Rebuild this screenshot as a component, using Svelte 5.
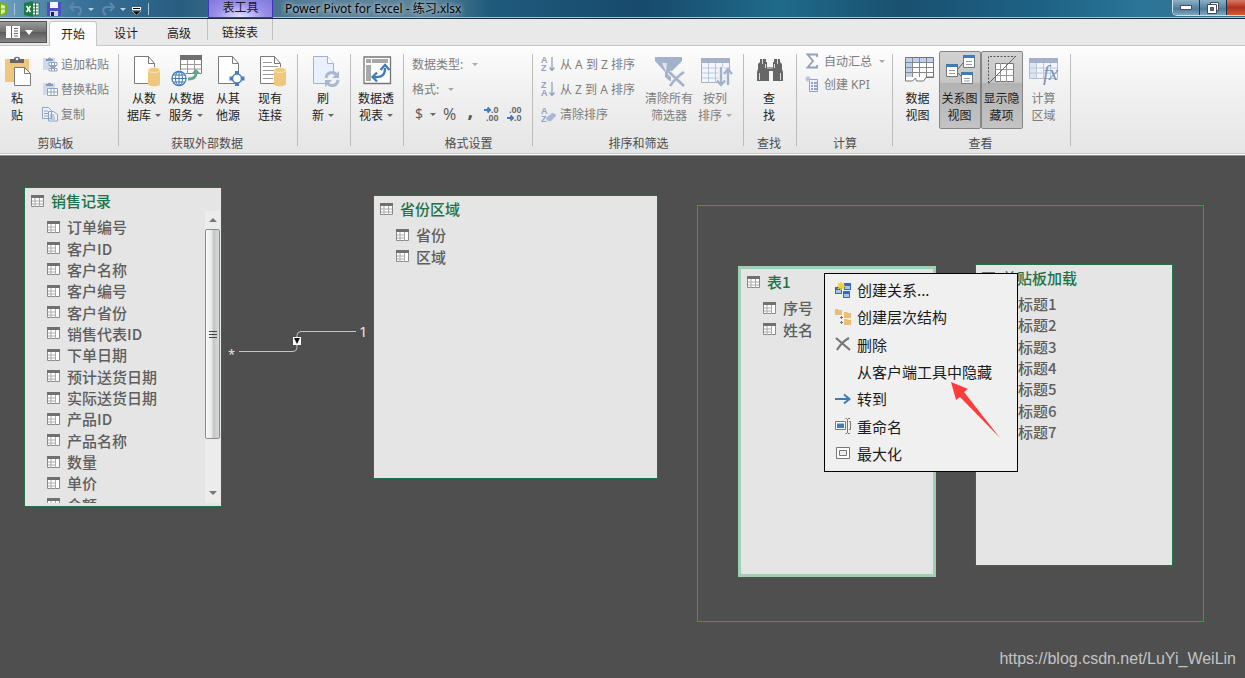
<script>
    // Icon bodies, big ones are drawn on a 32x32 grid and small ones on 16x16
    const page = '<path d="M6.5 1.5h14l6 7v20h-20z" fill="#fff" stroke="#7a7a7a"/><path d="M20.5 1.5v7h6" fill="none" stroke="#7a7a7a"/>';
    const drum = '<path d="M20 15v14c0 3 12 3 12 0V15z" fill="#edc87e"/><ellipse cx="26" cy="15" rx="6" ry="2.5" fill="#f0c878" stroke="#fff6e0" stroke-width=".7"/>';

    const icons = {
        paste: '<path d="M4 4h24v23H4z" fill="#edc87e"/><path d="M9 8V4h4c0-3 6-3 6 0h4v4z" fill="#666"/><circle cx="16" cy="4" r="1.3" fill="#eee"/><path d="M13.5 12.5h10l6 6v12h-16z" fill="#fff" stroke="#7a7a7a"/><path d="M23.5 12.5v6h6" fill="none" stroke="#7a7a7a"/>',
        database: page + drum,
        service: '<path d="M10.5.5h21v18h-21z" fill="#fff" stroke="#7a7a7a"/><path d="M10 0h22v5H10z" fill="#6f6f6f"/><path d="M17.5 5v14M24.5 5v14M11 9.5h20M11 14h20" stroke="#999"/><circle cx="9" cy="23.5" r="8.5" fill="#f2f2f2"/><circle cx="9" cy="23.5" r="7" fill="#fff" stroke="#3f78b4" stroke-width="1.3"/><path d="M2 23.5h14M9 16.5v14M3.5 20h11M3.5 27h11" stroke="#3f78b4"/><ellipse cx="9" cy="23.5" rx="3.5" ry="7" fill="none" stroke="#3f78b4"/><path d="M18 24c6 0 8-2 8-6" fill="none" stroke="#6aa28e" stroke-width="3"/><path d="M21 19l5-5 5 5z" fill="#6aa28e"/>',
        other: page + '<path d="M25 16v15M17.5 23.5h15" stroke="#4a7fb8" stroke-width="4"/><path d="M25 17.5l6 6-6 6-6-6z" fill="#4a7fb8"/><circle cx="25" cy="23.5" r="4.5" fill="#fff" stroke="#4a7fb8" stroke-width="1.5"/>',
        existing: page + '<path d="M9 7.5h9M9 11.5h15M9 15.5h12M9 19.5h12M9 23.5h10" stroke="#999"/>' + drum,
        refresh: '<path d="M6.5 1.5h14l6 7v20h-20z" fill="#eaf1fc" stroke="#9fb2d3"/><path d="M20.5 1.5v7h6" fill="#fff" stroke="#9fb2d3"/><circle cx="25" cy="24" r="8" fill="#f2f2f2"/><path d="M19 23c1-7 9-7 11-2M31 25c-1 7-9 7-11 2" fill="none" stroke="#a9b8d2" stroke-width="3"/><path d="M32 16v7h-7zM18 32v-7h7z" fill="#a9b8d2"/>',
        pivot: '<path d="M4 2h26.5v26.5H4z" fill="#fff" stroke="#767676" stroke-width="1.3"/><path d="M6 4h5v4H6zM12 4h16v4H12zM6 10h5v16H6z" fill="#a8a8a8"/><path d="M14 22c9 1 11-3 11-9" fill="none" stroke="#3f7cb8" stroke-width="2.3"/><path d="M20.5 15l4.5-5 4.5 5M17 17.5L12.5 22l4.5 4.5" fill="none" stroke="#3f7cb8" stroke-width="2.3"/>',
        funnel: '<path d="M2 2h27v4L18 17v10l-6-5v-5L2 6z" fill="#a3b1cb"/><path d="M9 8h5l-1 9z" fill="#dce4f1"/><path d="M16 17l15 14M31 17c-6 4-10 8-14 14" stroke="#f0f0f0" stroke-width="5" fill="none"/><path d="M16 17l15 14M31 17c-6 4-10 8-14 14" stroke="#a3b1cb" stroke-width="2.5" fill="none"/>',
        column: '<path d="M2.5 3.5h28v24h-28z" fill="#f3f7fd" stroke="#a3b1cb"/><path d="M2 3h29v5H2z" fill="#a3b1cb"/><path d="M9.5 8v20M16.5 8v20M23.5 8v20M3 13h27M3 18h27M3 23h27" stroke="#b9c6dc"/><path d="M22 12v17M29 30V14" stroke="#f0f0f0" stroke-width="6"/><path d="M22 12v17M18 25.5l4 4.5 4-4.5M29 30V15M25 19l4-5 4 5" fill="none" stroke="#a3b1cb" stroke-width="2.3"/>',
        find: '<path d="M7 4h6v3h1v5h6V7h1V4h6v3l2 2v5l1 3v9h-10V16h-4v10H4v-9l1-3V9l2-2z" fill="#666"/><path d="M9.5 4v5M12.5 9v4M21.5 9v4M24.5 4v5M6.5 18v7M27.5 18v7M14 13h6" stroke="#d8d8d8"/>',
        dataView: '<path d="M3.5 2.5h28v20h-28z" fill="#fff" stroke="#747474"/><path d="M4 3h27v5H4zM4 8h6v14H4z" fill="#bdd2ea"/><path d="M10.5 3v19M17.5 3v19M24.5 3v19M4 7.5h27M4 12.5h27M4 17.5h27" stroke="#878787"/><path d="M3.5 22v4h7l3-3 1 3h7l3-4h7" fill="#fff" stroke="#747474"/>',
        diagram: '<path d="M14 14l5-6M14 18l4 4" stroke="#666"/><path d="M2.5 9.5h11v12h-11zM19.5.5h11v12h-11zM17.5 17.5h11v11h-11z" fill="#fff" stroke="#777"/><path d="M2 9h12v3H2zM19 0h12v3H19zM17 17h12v3H17z" fill="#3f7cb8"/><path d="M5 15.5h6M5 18.5h6M22 6.5h6M22 9.5h6M20 23.5h6M20 26h6" stroke="#999"/>',
        hidden: '<path d="M9.5 8.5h18v18h-18z" fill="#fff" stroke="#777"/><path d="M14.5 8v19M20.5 8v19M9 14.5h19M9 20.5h19" stroke="#999"/><path d="M2.5 28V1.5H30" fill="none" stroke="#555" stroke-dasharray="2 1.5"/><path d="M2.5 28.5l27-27" stroke="#666"/>',
        area: '<path d="M1.5 3.5h28v20h-28z" fill="#f3f7fd" stroke="#b0bdd4"/><path d="M1 3h29v5H1z" fill="#a3b1cb"/><path d="M2 8h6v15H2z" fill="#dbe6f5"/><path d="M8.5 8v16M15.5 8v16M22.5 8v16M2 13h27M2 18h27" stroke="#b9c6dc"/><text x="15" y="25" font-family="Liberation Serif, serif" font-style="italic" font-size="21" fill="#7f92b4">fx</text>',

        append: '<path d="M1 2h12v12H1z" fill="#cfdbed"/><path d="M4 3h2a1 1 0 0 1 3 0h2v2H4z" fill="#8799b8"/><path d="M7 6.5h8v3H7zM7 12.5h8V15H7z" fill="#fff" stroke="#91a2c0"/><path d="M8 10h6l-3 3zM9.5 6.5v3M12.5 6.5v3M9.5 13v2M12.5 13v2" fill="#91a2c0" stroke="#91a2c0"/>',
        replace: '<path d="M1 2h12v12H1z" fill="#cfdbed"/><path d="M4 3h2a1 1 0 0 1 3 0h2v2H4z" fill="#8799b8"/><path d="M5.5 7.5h10v7h-10z" fill="#fff" stroke="#91a2c0"/><path d="M5 11h10M9 8v6M12 8v6" stroke="#91a2c0"/>',
        copy: '<path d="M.5 1.5h6l3 3v8h-9zM6.5 5.5h5l4 3V15h-9z" fill="#edf3fc" stroke="#91a2c0"/><path d="M2 5h4M2 7.5h4M2 10h4M8 9h4M8 11h5M8 13h5" stroke="#91a2c0"/>',
        eraser: '<text x="0" y="8" font-family="Liberation Sans, sans-serif" font-weight="bold" font-size="9" fill="#91a2c0">A</text><text x="0" y="16" font-family="Liberation Sans, sans-serif" font-weight="bold" font-size="9" fill="#91a2c0">Z</text><path d="M5 12l6-5q4 0 4 3l-5 5q-4 1-5-3z" fill="#a9b9d5"/>',
        sum: '<path d="M12 4V1.5H2.5L8 8l-5.5 6.5H12V12" fill="none" stroke="#8f9fbd" stroke-width="1.8"/>',
        kpi: '<path d="M4.5 3.5h8v12h-8z" fill="#eef3fb" stroke="#91a2c0"/><path d="M6 7h2M6 10h2M6 13h2M9 7h3M9 10h3M9 13h3" stroke="#91a2c0" stroke-width="2"/><path d="M3 0v6M0 3h6M1 1l4 4M5 1L1 5" stroke="#a9b9d5"/>',
        moreDecimals: '<path d="M0 4h6M3.5 1.5L6 4 3.5 6.5" fill="none" stroke="#3f7cb8" stroke-width="2"/><text x="7" y="7" font-family="Liberation Sans, sans-serif" font-weight="bold" font-size="9" fill="#666">.0</text><text x="2" y="15" font-family="Liberation Sans, sans-serif" font-weight="bold" font-size="9" fill="#666">.00</text>',
        lessDecimals: '<path d="M0 12h6M3.5 9.5L6 12l-2.5 2.5" fill="none" stroke="#3f7cb8" stroke-width="2"/><text x="2" y="7" font-family="Liberation Sans, sans-serif" font-weight="bold" font-size="9" fill="#666">.00</text><text x="7" y="15" font-family="Liberation Sans, sans-serif" font-weight="bold" font-size="9" fill="#666">.0</text>',

        table: '<path d="M2.5 3.5h12v10h-12z" fill="#fff" stroke="#8a8a8a"/><path d="M2 2h13v3H2z" fill="#707070"/><path d="M6 5v9M10.5 5v9M3 8h11M3 11h11" stroke="#aaa"/>',
        field: '<path d="M2.5 3.5h12v10h-12z" fill="#fff" stroke="#8a8a8a"/><path d="M2 2h13v3H2z" fill="#707070"/><path d="M6 5v9M10.5 5v9M3 8h8M3 11h8" stroke="#aaa"/>',

        relation: '<path d="M0 5h7v7H0zM9 1h7v7H9zM8 9h7v7H8z" fill="#3c66b8"/><path d="M1 8h5v3H1zM10 4h5v3h-5zM9 12h5v3H9z" fill="#a9c3ee"/><path d="M6 0v8M2 4h8M3 1l6 6M9 1L3 7" stroke="#f2cd3c" stroke-width="1.5"/>',
        hierarchy: '<path d="M0 0h3l1 1h3v5H0zM9 3h3l1 1h3v5H9zM9 10h3l1 1h3v5H9z" fill="#e9bd75"/><path d="M6.5 7v3M5 8.5h3M6.5 12v3M5 13.5h3" stroke="#777"/>',
        remove: '<path d="M1 2l14 12M14 2C8 5 5 9 2 14" fill="none" stroke="#777" stroke-width="2.2"/>',
        goTo: '<path d="M0 8h14M9 3.5L14.5 8 9 12.5" fill="none" stroke="#3f7cb8" stroke-width="2"/>',
        rename: '<path d="M.5 3.5h10v8H.5z" fill="#fff" stroke="#777"/><path d="M2 5.5h7V10H2z" fill="#3f7cb8"/><path d="M12.5 1v14M10.5.5H12M13 .5h2M10.5 15.5H12M13 15.5h2M14 3.5h1.5v8H14" fill="none" stroke="#777"/>',
        maximize: '<path d="M1.5 2.5h13v11h-13z" fill="#fff" stroke="#777"/><path d="M4.5 5.5h7v5h-7z" fill="#eee" stroke="#777"/>',

        excel: '<path d="M7 2h8v12H7z" fill="#fff" stroke="#1e7a45"/><path d="M9 5h5M9 8h5M9 11h5M11.5 2v12" stroke="#1e7a45"/><path d="M0 2l9-2v16l-9-2z" fill="#1e7a45"/><path d="M2.5 5l4 6M6.5 5l-4 6" stroke="#fff" stroke-width="1.5"/>',
        save: '<path d="M1 1h14v14H1z" fill="#4c4fc4"/><path d="M4 1h8v6H4z" fill="#f4f6ff"/><path d="M4 10h8v5H4z" fill="#cfd3e6"/><path d="M5 11h3v4H5z" fill="#1d1f56"/>',
        undo: '<path d="M6 2L2 6l4 4M2 6h7c5 0 5 6 1 8" fill="none" stroke="#5f86ad" stroke-width="2"/>',
        redo: '<path d="M10 2l4 4-4 4M14 6H7c-5 0-5 6-1 8" fill="none" stroke="#5f86ad" stroke-width="2"/>'
    };

    const contextMenu = [
        { icon: 'relation', label: '创建关系...' },
        { icon: 'hierarchy', label: '创建层次结构' },
        { icon: 'remove', label: '删除' },
        { icon: '', label: '从客户端工具中隐藏' },
        { icon: 'goTo', label: '转到' },
        { icon: 'rename', label: '重命名' },
        { icon: 'maximize', label: '最大化' }
    ];

    const tables = [
        {
            id: 'sales',
            name: '销售记录',
            fields: ['订单编号', '客户ID', '客户名称', '客户编号', '客户省份', '销售代表ID', '下单日期',
                '预计送货日期', '实际送货日期', '产品ID', '产品名称', '数量', '单价', '金额']
        },
        { id: 'region', name: '省份区域', fields: ['省份', '区域'] },
        { id: 'sheet', name: '表1', fields: ['序号', '姓名'] },
        { id: 'clip', name: '剪贴板加载', fields: ['标题1', '标题2', '标题3', '标题4', '标题5', '标题6', '标题7'] }
    ];

    let selected = $state('sheet');
    let diagramOn = $state(true);
    let hiddenOn = $state(true);

    // three rows take 64px
    function listHeight(fields) {
        return Math.round((fields.length * 64) / 3);
    }
</script>

{#snippet icon(name, size)}
    <svg class="icon" width={size} height={size} viewBox="0 0 {size} {size}" overflow="visible" aria-hidden="true">{@html icons[name]}</svg>
{/snippet}

{#snippet big(name, first, second, caret, disabled)}
    <button class="big" {disabled}>
        {@render icon(name, 32)}
        <span>{first}</span>
        <span>{second}{#if caret}<i class="caret"></i>{/if}</span>
    </button>
{/snippet}

{#snippet small(name, label, caret)}
    <button class="small" disabled>
        {@render icon(name, 16)}
        <span>{label}</span>
        {#if caret}<i class="caret"></i>{/if}
    </button>
{/snippet}

{#snippet sort(top, bottom, label)}
    <button class="small" disabled>
        <svg class="icon" width="16" height="16" viewBox="0 0 16 16" aria-hidden="true">
            <g font-family="Liberation Sans, sans-serif" font-weight="bold" font-size="9" fill="#91a2c0">
                <text x="0" y="7">{top}</text>
                <text x="0" y="15">{bottom}</text>
            </g>
            <path d="M11 1v13M8.5 11.5L11 14.5l2.5-3" fill="none" stroke="#91a2c0" stroke-width="1.3" />
        </svg>
        <span>{label}</span>
    </button>
{/snippet}

<div class="window">
    <header class="titlebar">
        <div class="quick">
            <svg width="7" height="16" viewBox="0 0 7 16" aria-hidden="true">
                <path d="M0 2l6 2v8l-6 3z" fill="#d9efb0" stroke="#78ae22" stroke-width="2" />
                <path d="M0 8h6" stroke="#78ae22" />
            </svg>
            <i class="bar"></i>
            <button aria-label="Excel">{@render icon('excel', 16)}</button>
            <button aria-label="保存">{@render icon('save', 16)}</button>
            <button aria-label="撤消">{@render icon('undo', 16)}</button>
            <i class="caret pale"></i>
            <button aria-label="恢复">{@render icon('redo', 16)}</button>
            <i class="caret pale"></i>
            <button aria-label="自定义">
                <svg width="9" height="8" viewBox="0 0 9 8"><path d="M0 0h9v3H0z" fill="#fff" /><path d="M1 1h7v1H1z" /><path d="M0 4h9L4.5 8z" stroke="#fff" stroke-width=".5" /></svg>
            </button>
            <i class="bar"></i>
        </div>
        <div class="context-title">表工具</div>
        <h1>Power Pivot for Excel - 练习.xlsx</h1>
        <div class="controls">
            <button aria-label="最小化"><svg width="12" height="6" viewBox="0 0 12 6"><path d="M.5.5h11v4H.5z" fill="#fff" stroke="#444b5c" /></svg></button>
            <button aria-label="还原"><svg width="12" height="12" viewBox="0 0 12 12"><path d="M3.5.5h8v8h-8z" fill="#fff" stroke="#444b5c" /><path d="M.5 2.5h9v9h-9z" fill="#fff" stroke="#444b5c" /><path d="M3.5 5.5h3v3h-3z" fill="#4f7c9c" stroke="#444b5c" /></svg></button>
            <button class="close" aria-label="关闭"></button>
        </div>
    </header>

    <nav class="tabs">
        <button class="file" aria-label="文件">
            <svg width="14" height="12" viewBox="0 0 14 12"><path d="M0 0h14v12H0z" fill="#fff" /><path d="M5.5 0v12M8 2.5h4M8 5h4M8 7.5h4M8 10h4" stroke="#666" /></svg>
            <svg width="8" height="5" viewBox="0 0 8 5"><path d="M0 0h8L4 5z" fill="#fff" /></svg>
        </button>
        <button class="tab active">开始</button>
        <button class="tab">设计</button>
        <button class="tab">高级</button>
        <button class="tab linked">链接表</button>
    </nav>

    <div class="ribbon">
        <section class="group clipboard">
            <div class="body">
                {@render big('paste', '粘', '贴', false, false)}
                <div class="stack">
                    {@render small('append', '追加粘贴')}
                    {@render small('replace', '替换粘贴')}
                    {@render small('copy', '复制')}
                </div>
            </div>
            <h2>剪贴板</h2>
        </section>
        <section class="group external">
            <div class="body">
                {@render big('database', '从数', '据库', true, false)}
                {@render big('service', '从数据', '服务', true, false)}
                {@render big('other', '从其', '他源', false, false)}
                {@render big('existing', '现有', '连接', false, false)}
            </div>
            <h2>获取外部数据</h2>
        </section>
        <section class="group single">
            <div class="body">{@render big('refresh', '刷', '新', true, false)}</div>
        </section>
        <section class="group single">
            <div class="body">{@render big('pivot', '数据透', '视表', true, false)}</div>
        </section>
        <section class="group format">
            <div class="body">
                <div class="stack">
                    <button class="small" disabled>数据类型: <i class="caret"></i></button>
                    <button class="small" disabled>格式: <i class="caret"></i></button>
                    <div class="numbers">
                        <button>$</button>
                        <i class="caret"></i>
                        <button class="percent">%</button>
                        <button class="comma">,</button>
                        <button aria-label="增加小数位">{@render icon('moreDecimals', 16)}</button>
                        <button aria-label="减少小数位">{@render icon('lessDecimals', 16)}</button>
                    </div>
                </div>
            </div>
            <h2>格式设置</h2>
        </section>
        <section class="group sorting">
            <div class="body">
                <div class="stack">
                    {@render sort('A', 'Z', '从 A 到 Z 排序')}
                    {@render sort('Z', 'A', '从 Z 到 A 排序')}
                    {@render small('eraser', '清除排序')}
                </div>
                {@render big('funnel', '清除所有', '筛选器', false, true)}
                {@render big('column', '按列', '排序', true, true)}
            </div>
            <h2>排序和筛选</h2>
        </section>
        <section class="group single">
            <div class="body">{@render big('find', '查', '找', false, false)}</div>
            <h2>查找</h2>
        </section>
        <section class="group calc">
            <div class="body">
                <div class="stack">
                    {@render small('sum', '自动汇总', true)}
                    {@render small('kpi', '创建 KPI')}
                </div>
            </div>
            <h2>计算</h2>
        </section>
        <section class="group view">
            <div class="body">
                {@render big('dataView', '数据', '视图', false, false)}
                <button class="big" class:on={diagramOn} aria-pressed={diagramOn} onclick={() => (diagramOn = !diagramOn)}>
                    {@render icon('diagram', 32)}
                    <span>关系图</span>
                    <span>视图</span>
                </button>
                <button class="big" class:on={hiddenOn} aria-pressed={hiddenOn} onclick={() => (hiddenOn = !hiddenOn)}>
                    {@render icon('hidden', 32)}
                    <span>显示隐</span>
                    <span>藏项</span>
                </button>
                {@render big('area', '计算', '区域', false, true)}
            </div>
            <h2>查看</h2>
        </section>
    </div>

    <main class="canvas">
        <div class="frame"></div>

        <svg class="link" width="150" height="60" viewBox="0 0 150 60" aria-hidden="true">
            <path d="M13 32.5h54q4 0 4-4v-12q0-4 4-4h55" fill="none" stroke="#c4c4c4" />
            <path d="M67 18h8v8h-8z" fill="#fff" />
            <path d="M68 19h6l-3 6z" fill="#111" />
            <text x="2" y="40" font-family="Open Sans, sans-serif" font-size="13" fill="#eee">*</text>
            <text x="133" y="18" font-family="Open Sans, sans-serif" font-size="15" fill="#eee">1</text>
        </svg>

        {#each tables as table}
            <!-- svelte-ignore a11y_click_events_have_key_events, a11y_no_noninteractive_element_interactions -->
            <article class="table {table.id}" class:selected={selected === table.id} onclick={() => (selected = table.id)}>
                <h3>{@render icon('table', 16)}{table.name}</h3>
                <div class="scroll">
                    <ul style="height: {listHeight(table.fields)}px">
                        {#each table.fields as field}
                            <li>{@render icon('field', 16)}{field}</li>
                        {/each}
                    </ul>
                    {#if table.id === 'sales'}
                        <div class="scrollbar">
                            <i class="up"></i>
                            <div class="thumb"><i></i><i></i><i></i></div>
                            <i class="down"></i>
                        </div>
                    {/if}
                </div>
            </article>
        {/each}

        <div class="menu" role="menu">
            {#each contextMenu as item}
                <button role="menuitem">
                    <span class="slot">{#if item.icon}{@render icon(item.icon, 16)}{/if}</span>
                    {item.label}
                </button>
            {/each}
        </div>

        <svg class="pointer" width="50" height="56" viewBox="0 0 50 56" aria-hidden="true">
            <path d="M0 0l17 7-4 3 36 46L9 15l-4 3z" fill="#ff3b3b" />
        </svg>

        <p class="watermark">https://blog.csdn.net/LuYi_WeiLin</p>
    </main>
</div>

<style>
    :global(body) {
        margin: 0;
        background: #4f4f4f;
    }

    .window {
        display: flex;
        flex-direction: column;
        min-height: 100vh;
        overflow: hidden;
        font: 12px/17px "Noto Sans CJK SC", sans-serif;
        color: #1c1c1c;
    }

    button {
        border: none;
        background: none;
        padding: 0;
        margin: 0;
        font: inherit;
        color: inherit;
        cursor: pointer;
    }

    button:disabled {
        color: #7d7d7d;
        cursor: default;
    }

    .icon {
        flex: none;
        display: block;
    }

    .caret {
        display: inline-block;
        border: 3px solid transparent;
        border-top-color: #666;
        border-bottom: none;
        margin-left: 4px;
        vertical-align: 3px;
    }

    button:disabled .caret {
        border-top-color: #aaa;
    }

    /* title bar */
    .titlebar {
        display: flex;
        height: 18px;
        border-bottom: 1px solid #1b2e40;
        box-shadow: inset 0 -1px #9cc4d8;
        background: linear-gradient(90deg, #6d9fc0 0, #3a7299 80px, #285d80 180px, #5c8299 330px, #5c8299 430px, #1f5a7c 490px, #174a6c 640px, #1f6a8a 780px, #1a5070 900px, #1d6285 1040px, #2b7598 1140px, #3d6f8c 100%);
    }

    .quick {
        display: flex;
        align-items: center;
        width: 208px;
        box-sizing: border-box;
    }

    .quick button {
        margin-left: 6px;
    }

    .quick .bar {
        width: 1px;
        height: 12px;
        margin: 0 3px 0 7px;
        background: #a9c6d6;
    }

    .quick .pale {
        border-top-color: #b9cede;
        margin-left: 4px;
    }

    .context-title {
        width: 65px;
        box-sizing: border-box;
        border: solid #3e35c4;
        border-width: 0 1px 1px;
        background: radial-gradient(ellipse at 50% 100%, #e6e2ff, #9a8fe8 55%, #7f76d8);
        text-align: center;
        line-height: 14px;
    }

    h1 {
        margin: 0;
        padding-left: 12px;
        font: 12px/17px "Noto Sans", "Noto Sans CJK SC", sans-serif;
        color: #000;
        text-shadow: 0 0 5px #b8ccd6, 0 0 5px #b8ccd6;
    }

    .controls {
        display: flex;
        height: 15px;
        margin-left: auto;
        border: solid #cfe0ea;
        border-width: 0 0 1px 1px;
        border-radius: 0 0 0 5px;
        overflow: hidden;
    }

    .controls button {
        display: flex;
        align-items: center;
        justify-content: center;
        width: 27px;
        border-right: 1px solid #1d3444;
        background: linear-gradient(#8fb0c4, #4f7c9c 60%, #7fa8bf);
    }

    .controls .close {
        width: 18px;
        border: none;
        background: linear-gradient(#d77a66, #b3311c 50%, #d45a30);
    }

    /* tabs */
    .tabs {
        display: flex;
        height: 27px;
        background: #e9e9e9;
        box-shadow: inset 0 -1px #c6c6c6;
    }

    .file {
        display: flex;
        align-items: center;
        gap: 5px;
        width: 47px;
        height: 22px;
        margin: 2px 2px 0 0;
        padding-left: 6px;
        border: 1px solid #555;
        border-left: none;
        background: linear-gradient(#9a9a9a, #6f6f6f 50%, #5c5c5c 51%, #858585);
    }

    .tab {
        width: 50px;
        margin-right: 3px;
        line-height: 26px;
    }

    .tab.active {
        width: 48px;
        margin: 2px 4px 0 0;
        border: 1px solid #c6c6c6;
        border-bottom: none;
        border-radius: 3px 3px 0 0;
        background: #fcfcfc;
        line-height: 22px;
    }

    .tab.linked {
        width: 66px;
        height: 21px;
        border: solid #c0c0c0;
        border-width: 0 1px;
    }

    /* ribbon */
    .ribbon {
        display: flex;
        padding-top: 8px;
        height: 101px;
        background: linear-gradient(#fdfdfd, #f0f0f0 45%, #e5e5e5);
        border-bottom: 1px solid #8c8c8c;
        box-shadow: inset 0 -1px #fff, inset 0 -2px #c8c8c8;
    }

    .group {
        display: flex;
        flex-direction: column;
        flex: none;
        width: 53px;
        height: 97px;
        box-sizing: border-box;
        background: linear-gradient(#bcbcbc, #bcbcbc) right top / 1px 92px no-repeat;
    }

    .group.clipboard { width: 119px; }
    .group.external { width: 179px; }
    .group.format { width: 129px; }
    .group.sorting { width: 211px; }
    .group.calc { width: 96px; }
    .group.view { width: 178px; }

    .group.single, .group.external, .group.view {
        padding-right: 3px;
    }

    .body {
        display: flex;
        flex: 1;
        align-items: flex-start;
        justify-content: center;
    }

    .clipboard .body { justify-content: flex-start; }
    .format .body, .sorting .body, .calc .body {
        justify-content: flex-start;
        padding-left: 8px;
    }

    .group h2 {
        margin: 0;
        text-align: center;
        font-size: 12px;
        font-weight: 400;
        line-height: 17px;
        color: #4c4c4c;
    }

    .clipboard h2 { padding-right: 8px; }

    .big {
        display: flex;
        flex-direction: column;
        align-items: center;
        width: 42px;
        height: 78px;
        margin-top: -3px;
        padding-top: 3px;
        border: 1px solid transparent;
        box-sizing: border-box;
        white-space: nowrap;
    }

    .big .icon {
        margin-bottom: 2px;
    }

    .big.on {
        border-color: #868686;
        border-radius: 2px;
        background: linear-gradient(#d2d2d2, #c6c6c6 40%, #b2b2b2 41%, #c4c4c4);
    }

    .clipboard .big { width: 34px; }
    .clipboard .stack { margin-left: 8px; }
    .sorting .big { width: 46px; }
    .sorting .stack { width: 105px; }

    .stack {
        display: flex;
        flex-direction: column;
        gap: 5px;
    }

    .small {
        display: flex;
        align-items: center;
        gap: 3px;
        height: 20px;
        font-family: "Noto Sans", "Noto Sans CJK SC", sans-serif;
        white-space: nowrap;
    }

    .format .small .caret { margin-left: 6px; }

    .calc .stack {
        gap: 3px;
        margin-top: -3px;
    }

    .numbers {
        display: flex;
        align-items: center;
        height: 20px;
        padding-left: 3px;
        gap: 7px;
        color: #555;
        font: 14px/20px "Open Sans", sans-serif;
    }

    .numbers .caret { margin-left: 0; }
    .numbers .percent { font-size: 16px; }
    .numbers .comma {
        width: 14px;
        padding-bottom: 8px;
        font-size: 20px;
        font-weight: 700;
    }

    /* diagram canvas */
    .canvas {
        position: relative;
        flex: 1;
        background: #4f4f4f;
    }

    .frame {
        position: absolute;
        left: 697px;
        top: 49px;
        width: 505px;
        height: 415px;
        border: 1px solid #f04134;
    }

    .link {
        position: absolute;
        left: 226px;
        top: 163px;
    }

    .table {
        position: absolute;
        display: flex;
        flex-direction: column;
        width: 198px;
        box-sizing: border-box;
        border: 1px solid #217346;
        background: #e5e5e5;
        font-size: 15px;
        font-weight: 500;
        color: #5e5e5e;
    }

    .sales { left: 24px; top: 31px; height: 320px; }
    .region { left: 373px; top: 39px; width: 285px; height: 284px; }
    .sheet { left: 738px; top: 110px; height: 311px; }
    .clip { left: 975px; top: 108px; height: 302px; }

    .table.selected {
        border: 3px solid #9fd0b3;
    }

    .table h3 {
        display: flex;
        align-items: center;
        gap: 6px;
        margin: 0;
        padding: 2px 0 0 4px;
        height: 21px;
        font-size: 15px;
        font-weight: 500;
        color: #217346;
    }

    .scroll {
        display: flex;
        flex: 1;
        min-height: 0;
        margin-bottom: 3px;
        overflow: hidden;
    }

    .table ul {
        flex: 1;
        display: grid;
        grid-auto-rows: 1fr;
        margin: 5px 0 0;
        padding: 0 0 0 20px;
        list-style: none;
    }

    .table li {
        display: flex;
        align-items: center;
        gap: 6px;
        white-space: nowrap;
    }

    .scrollbar {
        display: flex;
        flex-direction: column;
        align-items: center;
        width: 15px;
        margin-right: 1px;
        background: #ececec;
    }

    .scrollbar .up, .scrollbar .down {
        border: 4px solid transparent;
        margin: 7px 0 7px;
    }

    .scrollbar .up {
        border-bottom-color: #777;
        border-top: none;
    }

    .scrollbar .down {
        border-top-color: #777;
        border-bottom: none;
        margin: auto 0 8px;
    }

    .thumb {
        display: flex;
        flex-direction: column;
        align-items: center;
        justify-content: center;
        gap: 2px;
        width: 13px;
        height: 208px;
        border: 1px solid #8c8c8c;
        border-radius: 2px;
        background: linear-gradient(90deg, #fafafa, #e8e8e8 45%, #c2c6c8 55%, #d8d8d8);
    }

    .thumb i {
        width: 8px;
        height: 1px;
        background: #444;
    }

    .menu {
        position: absolute;
        left: 824px;
        top: 117px;
        display: grid;
        grid-auto-rows: 1fr;
        width: 194px;
        height: 199px;
        padding: 2px 0 4px;
        box-sizing: border-box;
        border: 1px solid #000;
        background: #f0f0f0;
    }

    .menu button {
        display: flex;
        align-items: center;
        gap: 6px;
        padding-left: 10px;
        font-size: 15px;
        color: #1a1a1a;
        white-space: nowrap;
    }

    .menu button:hover {
        background: #dcebf7;
    }

    .slot {
        width: 16px;
    }

    .pointer {
        position: absolute;
        left: 951px;
        top: 226px;
    }

    .watermark {
        position: absolute;
        right: 9px;
        bottom: 8px;
        margin: 0;
        font: 16px/22px "Liberation Sans", sans-serif;
        color: #c4c4c4;
    }
</style>
